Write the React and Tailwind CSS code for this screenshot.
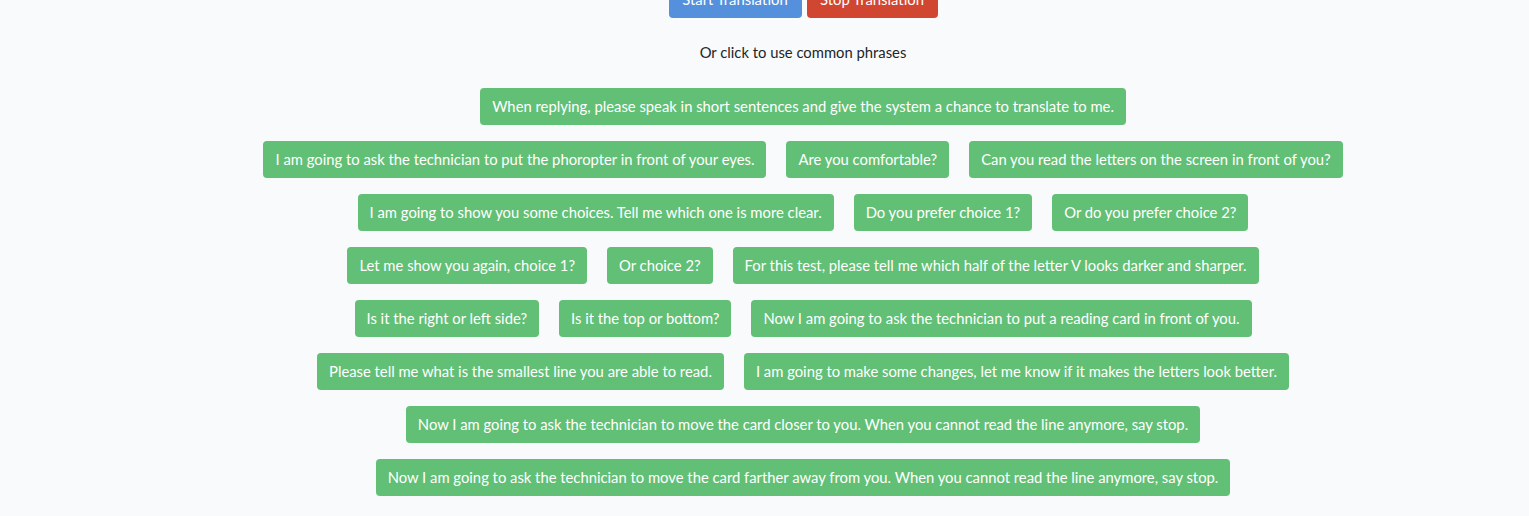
import React from "react";

const rows = [
  ["When replying, please speak in short sentences and give the system a chance to translate to me."],
  [
    "I am going to ask the technician to put the phoropter in front of your eyes.",
    "Are you comfortable?",
    "Can you read the letters on the screen in front of you?",
  ],
  [
    "I am going to show you some choices. Tell me which one is more clear.",
    "Do you prefer choice 1?",
    "Or do you prefer choice 2?",
  ],
  [
    "Let me show you again, choice 1?",
    "Or choice 2?",
    "For this test, please tell me which half of the letter V looks darker and sharper.",
  ],
  [
    "Is it the right or left side?",
    "Is it the top or bottom?",
    "Now I am going to ask the technician to put a reading card in front of you.",
  ],
  [
    "Please tell me what is the smallest line you are able to read.",
    "I am going to make some changes, let me know if it makes the letters look better.",
  ],
  ["Now I am going to ask the technician to move the card closer to you. When you cannot read the line anymore, say stop."],
  ["Now I am going to ask the technician to move the card farther away from you. When you cannot read the line anymore, say stop."],
];

export default function App() {
  return (
    <div
      className="min-h-[560px] bg-[#f8fafc] pl-[77px] text-[14.8px] leading-[1.6] text-[#212529]"
      style={{ fontFamily: "Lato, 'Noto Sans', sans-serif" }}
    >
      {/* TOP CONTROLS */}
      <div className="-mt-[19px] flex justify-center gap-[5px]">
        <button className="h-[37px] w-[133px] whitespace-nowrap rounded-[4px] bg-[#5590dc] text-white">
          Start Translation
        </button>
        <button className="h-[37px] w-[131px] whitespace-nowrap rounded-[4px] bg-[#d14631] text-white">
          Stop Translation
        </button>
      </div>

      <p className="mt-[23px] text-center">Or click to use common phrases</p>

      {/* PHRASES */}
      <div className="mt-[23px] flex flex-col items-center gap-4">
        {rows.map((row, i) => (
          <div key={i} className="flex justify-center gap-5">
            {row.map((text) => (
              <button
                key={text}
                className="h-[37px] whitespace-nowrap rounded-[4px] bg-[#62bf76] px-3 pt-px text-white"
              >
                {text}
              </button>
            ))}
          </div>
        ))}
      </div>
    </div>
  );
}
